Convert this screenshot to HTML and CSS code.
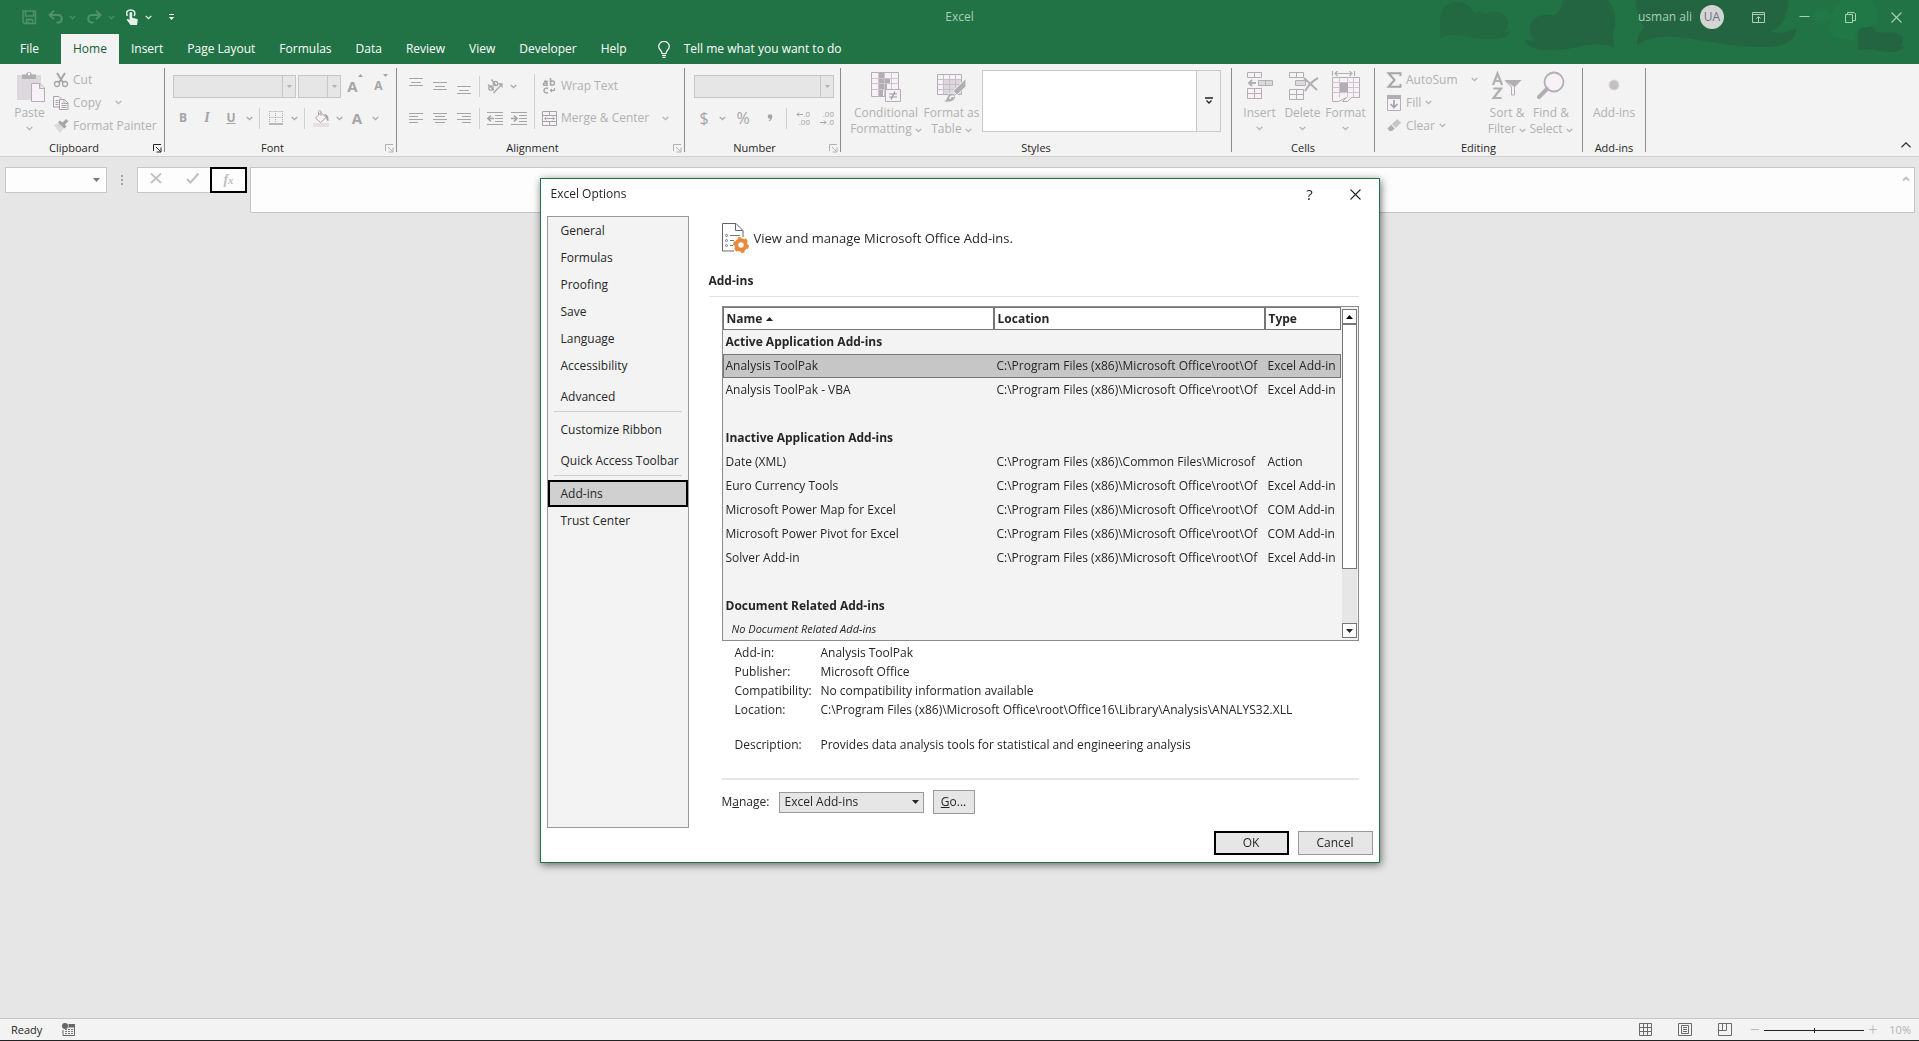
FILE: index.html
```
<!DOCTYPE html>
<html lang="en">

<head>
    <meta charset="utf-8" />
    <title>Excel</title>
    <meta name="viewport" content="width=device-width, initial-scale=1">
    <link rel="stylesheet" href="styles.css">
</head>

<body>
    <svg class="defs" aria-hidden="true">
        <symbol id="chev" viewBox="0 0 7 5"><path d="M.7.9l2.8 2.8L6.3.9" fill="none" stroke="currentColor" stroke-width="1.3" /></symbol>
        <symbol id="tri" viewBox="0 0 7 4"><path d="M0 0h7L3.500 4z" fill="currentColor" /></symbol>
        <symbol id="launch" viewBox="0 0 9 9"><path d="M.5 7V.5H8M3 3l4.500 4.500M8 3.500V8H3.500" fill="none" stroke="currentColor" /></symbol>
        <symbol id="close" viewBox="0 0 11 11"><path d="M.5.5l10 10M10.500.5l-10 10" fill="none" stroke="currentColor" stroke-width="1.100" /></symbol>
    </svg>

    <header class="top">
        <svg class="doodle" viewBox="0 0 519 64" aria-hidden="true">
            <g fill="#236541">
                <path opacity=".75" d="M40 39V20C40 8 48 2 57 2c9 0 15 5 17 12 4-3 9-2 11 0 10-5 23-2 23 9 0 4-1 7-3 9l6-1c-2 7-12 8-20 8-14 0-25-3-36-4-6 0-11 0-15 4z" />
                <path d="M130 28c0-11 10-14 24-13 5-3 9-8 8-15h46c8 9 9 22 5 34l1 14c-7-5-17-4-27-3-12 2-20 5-34 5-14 1-26-2-28-11 3 2 6 2 9 1-3-3-4-7-4-12z" />
                <path d="M236 0h152c0 16-6 27-18 32 10 2 20 0 26-4 2 13-12 19-34 19-30 0-50-5-76-9-18-3-36-2-49 7 0-9 3-13 8-18-8-8-9-18-9-27z" />
                <path d="M458 50V36c0-7 4-10 9-10 5 0 8 3 10 7 3-2 6-1 7 0 8-2 19 0 19 7 0 3-1 5-3 7l4-1c0 4-8 6-15 6-11 0-20-5-31-2z" />
            </g>
            <g fill="#217847">
                <path d="M432 14c2-6 5-11 9-14h28c8 6 10 16 8 26-5-1-9 0-11 2-8-3-12 3-11 12l-20-2c-7-6-7-17-3-24z" />
                <circle cx="422" cy="16" r="8" />
            </g>
        </svg>
        <div class="titlebar">
            <div class="quick">
                <button class="faded" aria-label="Save"><svg width="15" height="15" viewBox="0 0 15 15"><path d="M1 1h12.500v12.500H2.500L1 12zM3.500 1v5h8V1M4.500 13.500V9.500h6v4M6.500 11.500v2" fill="none" stroke="currentColor" stroke-width="1.500" /></svg></button>
                <button class="faded wide" aria-label="Undo"><svg width="15" height="14" viewBox="0 0 15 14"><path d="M6 .8L1.500 5 6 9.200M1.500 5H10c5 0 5 7.500 0 7.500H8.500" fill="none" stroke="currentColor" stroke-width="2" /></svg><svg class="chev"><use href="#chev" /></svg></button>
                <button class="faded wide" aria-label="Redo"><svg width="15" height="14" viewBox="0 0 15 14"><path d="M9 .8L13.500 5 9 9.200M13.500 5H5C0 5 0 12.500 5 12.500h1.500" fill="none" stroke="currentColor" stroke-width="2" /></svg><svg class="chev"><use href="#chev" /></svg></button>
                <button class="wide" aria-label="Touch/Mouse Mode"><svg width="13" height="17" viewBox="0 0 13 17"><path d="M1.500 7C-.5 3 1.500 1 4.700 1s5.200 2 3.500 6" fill="none" stroke="currentColor" stroke-width="1.500" /><path d="M3.500 4.500c0-2 2.700-2 2.700 0v4.200l4.300 1c1 .3 1.400.8 1.300 1.600L11 16H4.500L.5 10.500c.8-1 1.900-.7 3 .5z" fill="currentColor" /></svg><svg class="chev"><use href="#chev" /></svg></button>
                <button aria-label="Customize Quick Access Toolbar"><svg width="5" height="7" viewBox="0 0 5 7"><path d="M0 .5h5" stroke="#fff" /><path d="M0 3h5L2.500 6z" fill="#fff" /></svg></button>
            </div>
            <div class="app-name">Excel</div>
            <div class="account">
                <span>usman ali</span>
                <span class="avatar">UA</span>
                <div class="winbtns">
                    <button aria-label="Ribbon Display Options"><svg width="13" height="11" viewBox="0 0 13 11"><path d="M.5.5h12v10H.5zM.5 2.500h12M6.500 10V5M4.300 6.700l2.200-2.200 2.200 2.200" fill="none" stroke="currentColor" /></svg></button>
                    <button aria-label="Minimize"><svg width="11" height="11" viewBox="0 0 11 11"><path d="M.5 4.500h10" stroke="currentColor" /></svg></button>
                    <button aria-label="Restore"><svg width="11" height="11" viewBox="0 0 11 11"><path d="M.5 2.500h7v8h-7zM2.500 2V.5H9L10.500 2v6.500H8" fill="none" stroke="currentColor" /></svg></button>
                    <button aria-label="Close"><svg width="11" height="11"><use href="#close" /></svg></button>
                </div>
            </div>
        </div>
        <nav class="tabs">
            <a href="#" class="file">File</a>
            <a href="#" class="active">Home</a>
            <a href="#">Insert</a>
            <a href="#">Page Layout</a>
            <a href="#">Formulas</a>
            <a href="#">Data</a>
            <a href="#">Review</a>
            <a href="#">View</a>
            <a href="#">Developer</a>
            <a href="#">Help</a>
            <a href="#" class="tell"><svg width="12" height="17" viewBox="0 0 12 17"><path d="M4 12.500C4 9 .7 9 .7 5.500a5.200 5 0 0 1 10.600 0C11.300 9 8 9 8 12.500zM4 14.300h4M4.500 16.300h3" fill="none" stroke="currentColor" stroke-width="1.200" /></svg>Tell me what you want to do</a>
        </nav>
    </header>

    <section class="ribbon">
        <div class="group clipboard">
            <div class="tools">
                <button class="big" disabled>
                    <svg width="30" height="32" viewBox="0 0 30 32"><path d="M2 4h24v25H2z" fill="#ddd8dd" /><path d="M7 8V3.500h4C11.500 0 16.500 0 17 3.500h4V8z" fill="#b1afb1" /><circle cx="14" cy="3" r="1.200" fill="#fff" /><path d="M16.500 12.500H25l4.500 4.500v13.500h-13zM24.500 12.500V17.500h5" fill="#f8f2f8" stroke="#b1afb1" /></svg>
                    <span>Paste</span><svg class="chev"><use href="#chev" /></svg>
                </button>
                <div class="stack">
                    <button disabled><svg width="16" height="16" viewBox="0 0 16 16"><path d="M4 1l6 9.500M12 1L6 10.500" stroke="#a5a5a5" stroke-width="2" /><g fill="none" stroke="#a5a5a5" stroke-width="1.300"><circle cx="4" cy="12" r="2.500" /><circle cx="12" cy="12" r="2.500" /></g></svg>Cut</button>
                    <button class="spread" disabled><svg width="16" height="16" viewBox="0 0 16 16"><g fill="#f8f2f8" stroke="#a5a5a5"><path d="M.5 1.500H6L8.500 4v8h-8z" /><path d="M6.500 4.500h5L15 8v6.500H6.500zM11 4.500v4h4M8.500 8.500h2M8.500 10.500h5M8.500 12.500h5M2.500 5.500h3M2.500 7.500h3M2.500 9.500h3" /></g></svg><span>Copy</span><svg class="chev"><use href="#chev" /></svg></button>
                    <button disabled><svg width="16" height="16" viewBox="0 0 16 16"><path d="M1 7l5-2 5 5-4 5z" fill="#ddd8dd" /><path d="M5 4.500l2-2 2.500 2L13 1l2.500 2L12 6.500l1.500 2-2 2z" fill="#a5a5a5" /></svg>Format Painter</button>
                </div>
            </div>
            <div class="caption on">Clipboard<svg class="launch"><use href="#launch" /></svg></div>
        </div>

        <div class="group font">
            <div class="tools rows">
                <div class="row fields">
                    <div class="combo face"><select disabled aria-label="Font"></select><span><svg><use href="#tri" /></svg></span></div>
                    <div class="combo size"><select disabled aria-label="Font Size"></select><span><svg><use href="#tri" /></svg></span></div>
                    <button class="tool grow" disabled aria-label="Increase Font Size"><b>A</b><svg width="5" height="3" viewBox="0 0 5 3"><path d="M0 3h5L2.500 0z" fill="#a5a5a5" /></svg></button>
                    <button class="tool shrink" disabled aria-label="Decrease Font Size"><b>A</b><svg width="5" height="3" viewBox="0 0 5 3"><path d="M0 0h5L2.500 3z" fill="#a5a5a5" /></svg></button>
                </div>
                <div class="row">
                    <button class="tool" disabled><b>B</b></button>
                    <button class="tool" disabled><i>I</i></button>
                    <button class="tool" disabled><u>U</u></button>
                    <button class="drop" disabled aria-label="Underline style"><svg class="chev"><use href="#chev" /></svg></button>
                    <span class="sep"></span>
                    <button class="tool" disabled aria-label="Borders"><svg width="14" height="14" viewBox="0 0 14 14"><path d="M.5.500h13M.5 6.500h13M.5 0v12M6.500 0v12M13.500 0v12" stroke="#b3a7b3" stroke-dasharray="1 1" /><path d="M0 13h14" stroke="#a5a5a5" stroke-width="1.500" /></svg></button>
                    <button class="drop" disabled aria-label="Border menu"><svg class="chev"><use href="#chev" /></svg></button>
                    <span class="sep"></span>
                    <button class="tool" disabled aria-label="Fill Color"><svg width="16" height="17" viewBox="0 0 16 17"><path d="M0 13h16v4H0z" fill="#e6e0e6" /><path d="M2.500 8L8 2.500l5 5-5.500 5zM5.500 5V1.500C5.500.3 8 .3 8 1.500V6" fill="#f8f2f8" stroke="#a5a5a5" /><path d="M11 4c3 0 5 2 4.500 7-2 0-2-2-2.500-4z" fill="#a5a5a5" /></svg></button>
                    <button class="drop" disabled aria-label="Fill menu"><svg class="chev"><use href="#chev" /></svg></button>
                    <button class="tool letter" disabled><b>A</b></button>
                    <button class="drop" disabled aria-label="Font color menu"><svg class="chev"><use href="#chev" /></svg></button>
                </div>
            </div>
            <div class="caption">Font<svg class="launch"><use href="#launch" /></svg></div>
        </div>

        <div class="group align">
            <div class="tools">
                <div class="rows">
                    <div class="row">
                        <button class="tool" disabled aria-label="Top Align"><svg width="14" height="16" viewBox="0 0 14 16"><path d="M0 .5h14M2 4.500h10M0 7.500h14" stroke="#a5a5a5" /></svg></button>
                        <button class="tool" disabled aria-label="Middle Align"><svg width="14" height="16" viewBox="0 0 14 16"><path d="M0 4.500h14M2 8.500h10M0 11.500h14" stroke="#a5a5a5" /></svg></button>
                        <button class="tool" disabled aria-label="Bottom Align"><svg width="14" height="16" viewBox="0 0 14 16"><path d="M0 8.500h14M2 12.500h10M0 15.500h14" stroke="#a5a5a5" /></svg></button>
                        <span class="sep"></span>
                        <button class="tool" disabled aria-label="Orientation"><svg width="16" height="15" viewBox="0 0 16 15"><g fill="none" stroke="#a5a5a5" stroke-width="1.300"><circle cx="4" cy="9" r="2.200" /><path d="M1 5.500l6 5.500" /><circle cx="8.500" cy="4.500" r="2.200" /><path d="M4.500.5l4 5.500M6.500 14l8-8.500M11.500 5H15v3.500" /></g></svg></button>
                        <button class="drop" disabled aria-label="Orientation menu"><svg class="chev"><use href="#chev" /></svg></button>
                    </div>
                    <div class="row">
                        <button class="tool" disabled aria-label="Align Left"><svg width="14" height="11" viewBox="0 0 14 11"><path d="M0 .5h14M0 3.500h9M0 6.500h14M0 9.500h9" stroke="#a5a5a5" /></svg></button>
                        <button class="tool" disabled aria-label="Center"><svg width="14" height="11" viewBox="0 0 14 11"><path d="M0 .5h14M2 3.500h10M0 6.500h14M2 9.500h10" stroke="#a5a5a5" /></svg></button>
                        <button class="tool" disabled aria-label="Align Right"><svg width="14" height="11" viewBox="0 0 14 11"><path d="M0 .5h14M5 3.500h9M0 6.500h14M5 9.500h9" stroke="#a5a5a5" /></svg></button>
                        <span class="sep"></span>
                        <button class="tool" disabled aria-label="Decrease Indent"><svg width="16" height="13" viewBox="0 0 16 13"><path d="M0 .5h16M8 3.500h8M8 6.500h8M8 9.500h8M0 12.500h16" stroke="#a5a5a5" /><path d="M7 6.500H1.500M4 3.500l-3 3 3 3" fill="none" stroke="#a5a5a5" stroke-width="1.700" /></svg></button>
                        <button class="tool" disabled aria-label="Increase Indent"><svg width="16" height="13" viewBox="0 0 16 13"><path d="M0 .5h16M8 3.500h8M8 6.500h8M8 9.500h8M0 12.500h16" stroke="#a5a5a5" /><path d="M0 6.500h5.500M3 3.500l3 3-3 3" fill="none" stroke="#a5a5a5" stroke-width="1.700" /></svg></button>
                    </div>
                </div>
                <span class="sep tall"></span>
                <div class="rows wide">
                    <button class="row" disabled><svg width="15" height="16" viewBox="0 0 15 16"><g fill="none" stroke="#a5a5a5" stroke-width="1.500"><path d="M2 3.300h3v4H2.500c-1.500 0-1.500-2.300 0-2.300H5M8.500 0v7.500M8.500 4c1-1.500 4-1.500 4 1s-3 2.500-4 1.500M6 10.500c-2-1-4 0-4 2s2 3 4 2" /><path d="M12.500 10v2.500h-4M10 11l-1.500 1.500L10 14" stroke-width="1.200" /></g></svg>Wrap Text</button>
                    <button class="row spread" disabled><svg width="15" height="15" viewBox="0 0 15 15"><path d="M.5.500h14v14H.5zM.5 4.500h14M.5 10.500h14M7.500.5v4M7.500 10.500v4M2.500 7.500h10M4.500 5.800L2.700 7.500l1.800 1.700M10.500 5.800l1.800 1.700-1.800 1.700" fill="#f8f2f8" stroke="#a5a5a5" /></svg><span>Merge &amp; Center</span><svg class="chev"><use href="#chev" /></svg></button>
                </div>
            </div>
            <div class="caption">Alignment<svg class="launch"><use href="#launch" /></svg></div>
        </div>

        <div class="group number">
            <div class="tools rows">
                <div class="row fields">
                    <div class="combo format"><select disabled aria-label="Number Format"></select><span><svg><use href="#tri" /></svg></span></div>
                </div>
                <div class="row">
                    <button class="tool sign" disabled>$</button>
                    <button class="drop" disabled aria-label="Currency menu"><svg class="chev"><use href="#chev" /></svg></button>
                    <button class="tool sign pct" disabled>%</button>
                    <button class="tool sign" disabled aria-label="Comma Style"><svg width="6" height="8" viewBox="0 0 6 8"><circle cx="3" cy="2.500" r="2.300" fill="#a5a5a5" /><path d="M5.200 2.500C5.200 5 4 6.500 2 7.500L1.600 6.700C3 6 3.500 5 3.500 3z" fill="#a5a5a5" /></svg></button>
                    <span class="sep"></span>
                    <button class="tool dec" disabled><span><svg width="7" height="5" viewBox="0 0 7 5"><path d="M7 2.500H1M3 .5l-2 2 2 2" fill="none" stroke="currentColor" /></svg>.0</span><span>.00</span></button>
                    <button class="tool dec" disabled><span>.00</span><span><svg width="7" height="5" viewBox="0 0 7 5"><path d="M0 2.500h6M4 .5l2 2-2 2" fill="none" stroke="currentColor" /></svg>.0</span></button>
                </div>
            </div>
            <div class="caption">Number<svg class="launch"><use href="#launch" /></svg></div>
        </div>

        <div class="group styles">
            <div class="tools">
                <button class="big" disabled>
                    <svg width="32" height="32" viewBox="0 0 32 32"><path d="M1.500 1.500h27v24h-27z" fill="#f8f2f8" stroke="#b1afb1" /><path d="M8 2h7v5H8zM8 8h12v4H8zM8 13h9v5H8zM8 19h5v6H8z" fill="#b1afb1" /><path d="M1.500 7.500h27M1.500 12.500h27M1.500 18.500h27M8.500 1.500v24M14.500 1.500v24M21.500 1.500v24" stroke="#ccc6cc" fill="none" /><path d="M15.500 18.500h15v12h-15z" fill="#f8f2f8" stroke="#b1afb1" /><path d="M19 23h8M19 26h8M25 20.500l-4 8" stroke="#999" stroke-width="1.200" /></svg>
                    <span>Conditional</span><span>Formatting <svg class="chev"><use href="#chev" /></svg></span>
                </button>
                <button class="big" disabled>
                    <svg width="32" height="32" viewBox="0 0 32 32"><path d="M1.500 3.500h24v20h-24z" fill="#f8f2f8" stroke="#b1afb1" /><path d="M8 9h17v14H8z" fill="#ddd8dd" /><path d="M1.500 8.500h24M1.500 13.500h24M1.500 18.500h24M7.500 3.500v20M13.500 3.500v20M19.500 3.500v20" stroke="#c6c0c6" /><path d="M30 7.500v8L21 24l-4-4zM7 31c5-2 3-8 8-9 4 0 6 4 3 7-3 3-7 2-11 2z" fill="#b1afb1" stroke="#f3f3f3" /><path d="M14 28c0-3 3-4 4-2" fill="none" stroke="#fff" stroke-width="1.500" /></svg>
                    <span>Format as</span><span>Table <svg class="chev"><use href="#chev" /></svg></span>
                </button>
                <div class="gallery"><div></div><button aria-label="More styles"><svg width="8" height="8" viewBox="0 0 8 8"><path d="M0 1h8M1.500 3.500L4 6l2.500-2.500" fill="none" stroke="#222" stroke-width="1.300" /></svg></button></div>
            </div>
            <div class="caption">Styles</div>
        </div>

        <div class="group cells">
            <div class="tools">
                <button class="big" disabled>
                    <svg width="32" height="32" viewBox="0 0 32 32"><g fill="#f8f2f8" stroke="#b1afb1"><path d="M3.500 1.500h14v5h-14zM10.500 1.500v5M3.500 17.500h14v10h-14zM10.500 17.500v10M3.500 22.500h14" /><path d="M14.500 9.500h14v5h-14zM21.500 9.500v5" fill="#ddd8dd" /></g><path d="M12 12H5M8 9l-3 3 3 3" fill="none" stroke="#b1afb1" stroke-width="2" /></svg>
                    <span>Insert</span><svg class="chev"><use href="#chev" /></svg>
                </button>
                <button class="big" disabled>
                    <svg width="32" height="32" viewBox="0 0 32 32"><g fill="#f8f2f8" stroke="#b1afb1"><path d="M2.500 1.500h14v5h-14zM9.500 1.500v5M2.500 18.500h14v10h-14zM9.500 18.500v10M2.500 23.500h14" /><path d="M8.500 9.500h10v5h-10z" fill="#ddd8dd" /></g><path d="M17 7l13 12M31 7c-6 3-10 8-13 13" fill="none" stroke="#b1afb1" stroke-width="2" /></svg>
                    <span>Delete</span><svg class="chev"><use href="#chev" /></svg>
                </button>
                <button class="big" disabled>
                    <svg width="32" height="32" viewBox="0 0 32 32"><path d="M2.500 6.500h27v20h-8l-4 4h-5l4-4-8 4h-6z" fill="#f8f2f8" stroke="#b1afb1" /><path d="M2.500 11.500h27M2.500 16.500h27M2.500 21.500h27M9.500 6.500v20M17.500 6.500v20M23.500 6.500v20" stroke="#ccc6cc" /><path d="M10 12h8v9h-8z" fill="#b1afb1" /><path d="M2.500 0v5M24.500 0v5M5 2.500h17M7.500 0L5 2.500 7.500 5M19.500 0L22 2.500 19.500 5" fill="none" stroke="#b1afb1" stroke-width="1.200" /></svg>
                    <span>Format</span><svg class="chev"><use href="#chev" /></svg>
                </button>
            </div>
            <div class="caption">Cells</div>
        </div>

        <div class="group editing">
            <div class="tools">
                <div class="stack">
                    <button class="spread" disabled><svg width="16" height="16" viewBox="0 0 16 16"><path d="M14.500 4V1.200H2.500L8.500 8l-6 6.800h12V12" fill="none" stroke="#a5a5a5" stroke-width="2" /></svg><span>AutoSum</span><svg class="chev"><use href="#chev" /></svg></button>
                    <button disabled><svg width="16" height="16" viewBox="0 0 16 16"><path d="M1.500.5h13v15h-13z" fill="#f8f2f8" stroke="#b1afb1" /><path d="M1 0h14v4H1z" fill="#b1afb1" /><path d="M8 5v7.500M4.500 9L8 12.500 11.500 9" fill="none" stroke="#a5a5a5" stroke-width="1.700" /></svg>Fill <svg class="chev"><use href="#chev" /></svg></button>
                    <button disabled><svg width="16" height="16" viewBox="0 0 16 16"><path d="M6 6l5.500-5 3.500 4-5.500 5z" fill="#c9c4c9" /><path d="M5.200 6.700L8.700 10.700 6 13H3.500L1.500 10.500z" fill="#b1afb1" /></svg>Clear <svg class="chev"><use href="#chev" /></svg></button>
                </div>
                <button class="big" disabled>
                    <svg width="32" height="32" viewBox="0 0 32 32"><path d="M2 14L6.500 2.500 11 14M3.500 10h6M2.500 17.500h7.500L2.500 27h8" fill="none" stroke="#b1afb1" stroke-width="2.200" /><path d="M13.500 9h17l-6.500 7h-4z" fill="#b1afb1" /><path d="M15 10.500l5.500 5.500v8h3v-8" fill="#f8f2f8" stroke="#b1afb1" /></svg>
                    <span>Sort &amp;</span><span>Filter <svg class="chev"><use href="#chev" /></svg></span>
                </button>
                <button class="big" disabled>
                    <svg width="32" height="32" viewBox="0 0 32 32"><circle cx="19" cy="11" r="9.500" fill="#f8f2f8" stroke="#b1afb1" stroke-width="1.800" /><path d="M12 18l-8 8" stroke="#b1afb1" stroke-width="4" stroke-linecap="round" /></svg>
                    <span>Find &amp;</span><span>Select <svg class="chev"><use href="#chev" /></svg></span>
                </button>
            </div>
            <div class="caption">Editing</div>
        </div>

        <div class="group addins">
            <div class="tools">
                <button class="big" disabled>
                    <svg width="32" height="32" viewBox="0 0 32 32"><circle cx="16" cy="14" r="5.500" fill="#dedbde" /><circle cx="16" cy="14" r="4.500" fill="#c3bfc3" /></svg>
                    <span>Add-ins</span>
                </button>
            </div>
            <div class="caption">Add-ins</div>
        </div>
        <button class="collapse" aria-label="Collapse the Ribbon"><svg width="10" height="6" viewBox="0 0 10 6"><path d="M.5 5.300L5 .8l4.500 4.500" fill="none" stroke="#333" stroke-width="1.300" /></svg></button>
    </section>

    <section class="formula">
        <div class="namebox"><input type="text" aria-label="Name Box"><svg><use href="#tri" /></svg></div>
        <svg class="dots" width="2" height="10" viewBox="0 0 2 10"><path d="M0 0h2v2H0zM0 4h2v2H0zM0 8h2v2H0z" fill="#a5a5a5" /></svg>
        <div class="fbtns">
            <button disabled aria-label="Cancel entry"><svg width="12" height="11" viewBox="0 0 12 11"><path d="M1 .5l10 9.500M11 .5L1 10" stroke="#bfbfbf" stroke-width="1.800" /></svg></button>
            <button disabled aria-label="Enter"><svg width="13" height="11" viewBox="0 0 13 11"><path d="M1 6l3.500 3.500L12.500.5" fill="none" stroke="#bfbfbf" stroke-width="2" /></svg></button>
            <button class="fx" aria-label="Insert Function"><i>f</i><i class="sub">x</i></button>
        </div>
        <div class="fbar"><textarea aria-label="Formula Bar"></textarea><svg width="8" height="5" viewBox="0 0 8 5"><path d="M1 4.500l3-3 3 3" fill="none" stroke="#bfbfbf" stroke-width="1.800" /></svg></div>
    </section>

    <main class="workspace"></main>

    <footer class="status">
        <span>Ready</span>
        <svg width="13" height="13" viewBox="0 0 13 13"><path d="M1 7v5.500h11.500V4H6M6 2h6.500" fill="none" stroke="#666" /><path d="M7 1h6v3H7z" fill="#666" /><circle cx="3" cy="3" r="3" fill="#666" /><path d="M3 6.500h8M3 8.500h8M3 10.500h8" stroke="#777" stroke-dasharray="2 1" /></svg>
        <div class="views">
            <button aria-label="Normal"><svg width="13" height="13" viewBox="0 0 13 13"><path d="M.5.500h12v12H.5zM4.500.5v12M8.500.5v12M.5 4.500h12M.5 8.500h12" fill="none" stroke="currentColor" /></svg></button>
            <button aria-label="Page Layout"><svg width="14" height="13" viewBox="0 0 14 13"><path d="M.5.500h13v12H.5zM3.500 2.500h7v8h-7zM5 4.500h4M5 6.500h4M5 8.500h4" fill="none" stroke="currentColor" /></svg></button>
            <button aria-label="Page Break Preview"><svg width="14" height="13" viewBox="0 0 14 13"><path d="M.5.500h13v12H.5zM.5 7.500h8V.5M4.500.5v7" fill="none" stroke="currentColor" /></svg></button>
        </div>
        <div class="zoom">
            <svg width="8" height="9" viewBox="0 0 8 9"><path d="M0 4.500h8" stroke="#bbb" /></svg>
            <svg width="100" height="9" viewBox="0 0 100 9"><path d="M0 5.500h100M50.500 3v5" stroke="#222" /></svg>
            <svg width="8" height="9" viewBox="0 0 8 9"><path d="M0 4.500h8M4 .5v8" stroke="#bbb" /></svg>
        </div>
        <span class="percent">10%</span>
    </footer>

    <div class="overlay">
        <div class="dialog" role="dialog" aria-labelledby="dlgTitle">
            <div class="dlg-head">
                <span id="dlgTitle">Excel Options</span>
                <button class="help" aria-label="Help">?</button>
                <button aria-label="Close"><svg width="11" height="11"><use href="#close" /></svg></button>
            </div>
            <div class="dlg-main">
                <nav class="side">
                    <a href="#">General</a>
                    <a href="#">Formulas</a>
                    <a href="#">Proofing</a>
                    <a href="#">Save</a>
                    <a href="#">Language</a>
                    <a href="#">Accessibility</a>
                    <a href="#" class="last">Advanced</a>
                    <hr>
                    <a href="#">Customize Ribbon</a>
                    <a href="#" class="last">Quick Access Toolbar</a>
                    <hr>
                    <a href="#" class="current">Add-ins</a>
                    <a href="#">Trust Center</a>
                </nav>
                <div class="pane">
                    <div class="intro">
                        <svg width="28" height="30" viewBox="0 0 28 30"><path d="M12 28H.5V.5H14L21 7.500v6.500M13.500.5V7.500h7" fill="none" stroke="#666" /><g fill="none" stroke="#777"><path d="M8 12.500h10M8 17.500h4M8 22.500h3" /><circle cx="4.500" cy="12.500" r="1" /><circle cx="4.500" cy="17.500" r="1" /><circle cx="4.500" cy="22.500" r="1" /></g><circle cx="19" cy="22" r="4.700" fill="none" stroke="#e8893c" stroke-width="4" /><circle cx="19" cy="22" r="6.700" fill="none" stroke="#e8893c" stroke-width="2.500" stroke-dasharray="3.500 3.516" /></svg>
                        <span>View and manage Microsoft Office Add-ins.</span>
                    </div>
                    <h2>Add-ins</h2>
                    <div class="body">
                        <div class="list">
                            <table>
                                <thead>
                                    <tr>
                                        <th>Name <svg width="7" height="4" viewBox="0 0 7 4"><path d="M0 4h7L3.500 0z" fill="#222" /></svg></th>
                                        <th>Location</th>
                                        <th>Type</th>
                                    </tr>
                                </thead>
                                <tbody>
                                    <tr><th colspan="3">Active Application Add-ins</th></tr>
                                    <tr class="selected"><td>Analysis ToolPak</td><td>C:\Program Files (x86)\Microsoft Office\root\Of</td><td>Excel Add-in</td></tr>
                                    <tr><td>Analysis ToolPak - VBA</td><td>C:\Program Files (x86)\Microsoft Office\root\Of</td><td>Excel Add-in</td></tr>
                                    <tr><td colspan="3"></td></tr>
                                    <tr><th colspan="3">Inactive Application Add-ins</th></tr>
                                    <tr><td>Date (XML)</td><td>C:\Program Files (x86)\Common Files\Microsof</td><td>Action</td></tr>
                                    <tr><td>Euro Currency Tools</td><td>C:\Program Files (x86)\Microsoft Office\root\Of</td><td>Excel Add-in</td></tr>
                                    <tr><td>Microsoft Power Map for Excel</td><td>C:\Program Files (x86)\Microsoft Office\root\Of</td><td>COM Add-in</td></tr>
                                    <tr><td>Microsoft Power Pivot for Excel</td><td>C:\Program Files (x86)\Microsoft Office\root\Of</td><td>COM Add-in</td></tr>
                                    <tr><td>Solver Add-in</td><td>C:\Program Files (x86)\Microsoft Office\root\Of</td><td>Excel Add-in</td></tr>
                                    <tr><td colspan="3"></td></tr>
                                    <tr><th colspan="3">Document Related Add-ins</th></tr>
                                    <tr class="none"><td colspan="3">No Document Related Add-ins</td></tr>
                                </tbody>
                            </table>
                            <div class="scroll">
                                <button aria-label="Scroll up"><svg width="7" height="4" viewBox="0 0 7 4"><path d="M0 4h7L3.500 0z" fill="#000" /></svg></button>
                                <div class="track"><div class="thumb"></div></div>
                                <button aria-label="Scroll down"><svg width="7" height="4"><use href="#tri" /></svg></button>
                            </div>
                        </div>
                        <dl>
                            <dt>Add-in:</dt><dd>Analysis ToolPak</dd>
                            <dt>Publisher:</dt><dd>Microsoft Office</dd>
                            <dt>Compatibility:</dt><dd>No compatibility information available</dd>
                            <dt>Location:</dt><dd>C:\Program Files (x86)\Microsoft Office\root\Office16\Library\Analysis\ANALYS32.XLL</dd>
                            <dt class="desc">Description:</dt><dd class="desc">Provides data analysis tools for statistical and engineering analysis</dd>
                        </dl>
                        <div class="manage">
                            <label for="manage">M<u>a</u>nage:</label>
                            <div class="pick"><select id="manage"><option>Excel Add-ins</option></select><svg width="7" height="4"><use href="#tri" /></svg></div>
                            <button class="btn go"><u>G</u>o...</button>
                        </div>
                    </div>
                </div>
            </div>
            <div class="dlg-foot">
                <button class="btn default">OK</button>
                <button class="btn">Cancel</button>
            </div>
        </div>
    </div>
</body>

</html>
```
FILE: styles.css
```
* {
    box-sizing: border-box;
}

html,
body {
    height: 100%;
    margin: 0;
}

body {
    display: flex;
    flex-direction: column;
    background: #e6e6e6;
    color: #262626;
    font: 12px/16px "Open Sans", "Noto Sans", sans-serif;
    overflow: hidden;
}

button,
select,
input,
textarea {
    font: inherit;
    color: inherit;
    background: none;
    border: 0;
    border-radius: 0;
    padding: 0;
    margin: 0;
    outline: none;
}

a {
    color: inherit;
    text-decoration: none;
}

svg {
    flex: none;
}

.defs {
    display: none;
}

.chev {
    width: 7px;
    height: 5px;
}

/* title bar and tabs */
.top {
    position: relative;
    background: #217346;
    color: #fff;
}

.doodle {
    position: absolute;
    right: 0;
    top: 0;
    width: 519px;
    height: 64px;
}

.titlebar {
    position: relative;
    display: grid;
    grid-template-columns: 1fr auto 1fr;
    align-items: center;
    height: 34px;
}

.quick {
    display: flex;
    align-items: center;
    gap: 11px;
    padding-left: 22px;
}

.quick button {
    display: flex;
    align-items: center;
    color: #e6efe9;
}

.quick .wide {
    gap: 6px;
}

.quick .faded {
    color: #4f916a;
}

.quick button:last-child {
    padding-left: 6px;
}

.app-name,
.account {
    color: #a9d0b8;
}

.account {
    display: flex;
    justify-content: flex-end;
    align-items: center;
}

.avatar {
    width: 24px;
    margin: 0 11px 0 8px;
    border-radius: 50%;
    background: #d4d4d4;
    color: #6a7480;
    line-height: 24px;
    text-align: center;
}

.winbtns {
    display: flex;
}

.winbtns button {
    display: flex;
    align-items: center;
    justify-content: center;
    width: 46px;
    height: 30px;
}

.tabs {
    position: relative;
    display: flex;
    height: 30px;
    line-height: 30px;
}

.tabs a {
    padding: 0 12px;
}

.tabs .file {
    padding: 0 22px 0 20px;
}

.tabs .active {
    background: #f3f3f3;
    color: #185c37;
}

.tabs .tell {
    display: flex;
    align-items: center;
    gap: 14px;
    padding-left: 19px;
}

/* ribbon */
.ribbon {
    display: flex;
    flex: none;
    padding: 4px 0;
    background: #f3f3f3;
    border-bottom: 1px solid #cfcfcf;
    color: #b1b1b1;
}

.group {
    display: flex;
    flex-direction: column;
    flex: none;
    height: 84px;
    border-right: 1px solid #8c8c8c;
}

.group button {
    white-space: nowrap;
}

.tools {
    display: flex;
    flex: 1;
}

.caption {
    position: relative;
    height: 15px;
    padding-right: 16px;
    color: #262626;
    font-size: 11px;
    line-height: 22px;
    text-align: center;
}

.launch {
    position: absolute;
    right: 2px;
    top: 7px;
    width: 9px;
    height: 9px;
    color: #b1b1b1;
}

.on .launch {
    color: #262626;
}

.clipboard { width: 165px; }
.font { width: 232px; }
.align { width: 288px; }
.number { width: 156px; }
.styles { width: 391px; }
.cells { width: 143px; }
.editing { width: 208px; }
.addins { width: 63px; }

.styles .caption,
.cells .caption,
.editing .caption,
.addins .caption {
    padding: 0;
}

.big {
    display: flex;
    flex-direction: column;
    align-items: center;
    padding-top: 3px;
}

.big > svg:first-child {
    margin-bottom: 2px;
}

.big > .chev {
    margin-top: 5px;
}

.stack {
    display: flex;
    flex-direction: column;
}

.stack button {
    display: flex;
    align-items: center;
    gap: 4px;
    height: 23px;
}

.spread span {
    margin-right: auto;
}

.clipboard .big {
    width: 53px;
    padding-left: 6px;
}

.clipboard .spread {
    width: 69px;
}

.rows {
    flex-direction: column;
    gap: 2px;
}

div.rows {
    display: flex;
}

.row {
    display: flex;
    align-items: center;
    height: 30px;
}

.tools.rows,
.align .rows {
    padding-top: 3px;
}

.tool,
.drop {
    display: flex;
    align-items: center;
    justify-content: center;
    width: 24px;
    height: 24px;
    color: #a5a5a5;
}

.drop {
    width: 12px;
}

.tool u {
    font-weight: bold;
}

.tool i {
    font: italic bold 14px/16px "Liberation Serif", serif;
}

.letter b,
.grow b {
    font-size: 15px;
}

.grow,
.shrink {
    align-items: flex-start;
}

.grow b,
.shrink b {
    line-height: 24px;
}

.sep {
    width: 1px;
    height: 21px;
    margin: 0 4px;
    background: #d0d0d0;
}

.align .sep {
    margin: 0 3px;
}

.align .tall {
    height: 55px;
    margin: 6px 7px 0 3px;
}

.font .tools {
    padding-left: 6px;
}

.align .tools,
.number .tools {
    padding-left: 7px;
}

.fields {
    gap: 2px;
    padding-left: 2px;
}

.combo,
.pick,
.namebox,
.fbar {
    display: grid;
}

.combo > *,
.pick > *,
.namebox > *,
.fbar > * {
    grid-area: 1 / 1;
}

.combo select {
    appearance: none;
    height: 23px;
    background: #e6e6e6;
    border: 1px solid #c6c6c6;
    opacity: 1;
}

.combo span {
    display: flex;
    align-items: center;
    justify-content: center;
    justify-self: end;
    width: 14px;
    border-left: 1px solid #c6c6c6;
}

.combo span svg {
    width: 5px;
    height: 3px;
}

.face { width: 123px; }
.size { width: 43px; }
.format { width: 140px; }

.align .wide {
    width: 127px;
}

.wide .row {
    gap: 4px;
}

.sign {
    font-size: 16px;
}

.sign.pct {
    width: 30px;
}

.dec {
    flex-direction: column;
    align-items: flex-end;
    padding-right: 5px;
    font-size: 8px;
    line-height: 8px;
}

.dec span {
    display: flex;
    align-items: center;
}

.styles .tools {
    padding-left: 10px;
}

.styles .big:first-child {
    width: 70px;
}

.styles .big {
    width: 61px;
}

.gallery {
    display: flex;
    width: 239px;
    height: 62px;
    margin-top: 2px;
    background: #fff;
    border: 1px solid #c9c9c9;
}

.gallery div {
    flex: 1;
}

.gallery button {
    width: 24px;
    background: #f3f3f3;
    border-left: 1px solid #c9c9c9;
}

.cells .tools {
    padding-left: 6px;
}

.cells .big {
    width: 43px;
}

.editing .tools {
    padding-left: 11px;
}

.editing .stack {
    width: 99px;
}

.editing .spread {
    width: 92px;
}

.editing .big {
    width: 44px;
}

.addins .big {
    width: 62px;
}

.collapse {
    align-self: flex-end;
    margin-left: auto;
    padding-right: 8px;
}

/* formula bar */
.formula {
    display: flex;
    align-items: flex-start;
    padding: 10px 4px 0 5px;
}

.namebox {
    width: 102px;
    height: 26px;
    background: #fdfdfd;
    border: 1px solid #c6c6c6;
}

.namebox input {
    width: 100%;
    min-width: 0;
}

.namebox svg {
    width: 7px;
    height: 4px;
    place-self: center end;
    margin-right: 6px;
    color: #777;
}

.dots {
    margin: 8px 14px;
}

.fbtns {
    display: flex;
    height: 26px;
    background: #fdfdfd;
    border: 1px solid #c6c6c6;
    border-right: 0;
}

.fbtns button {
    width: 36px;
}

.fbtns .fx {
    width: 37px;
    margin: -1px 0;
    border: 2px solid #000;
    color: #bfbfbf;
    font: bold 14px/16px "Liberation Serif", serif;
}

.fx .sub {
    font-size: 11px;
}

.fbar {
    flex: 1;
    height: 46px;
    margin-left: 3px;
    background: #fdfdfd;
    border: 1px solid #c6c6c6;
}

.fbar textarea {
    resize: none;
}

.fbar svg {
    justify-self: end;
    margin: 8px 4px;
}

.workspace {
    flex: 1;
}

/* status bar */
.status {
    display: flex;
    align-items: center;
    height: 23px;
    padding: 0 8px 0 11px;
    background: #f3f3f3;
    border-top: 1px solid #c6c6c6;
    border-bottom: 1px solid #222;
    font-size: 11px;
}

.status > svg {
    margin-left: 20px;
}

.views {
    display: flex;
    gap: 26px;
    margin-left: auto;
    color: #6a6a6a;
}

.views button,
.zoom {
    display: flex;
    align-items: center;
}

.zoom {
    gap: 5px;
    margin: 0 12px 0 19px;
}

.percent {
    color: #b1b1b1;
}

/* options dialog */
.overlay {
    position: fixed;
    inset: 0;
    display: flex;
    align-items: center;
    justify-content: center;
}

.dialog {
    display: flex;
    flex-direction: column;
    width: 840px;
    max-width: 100%;
    background: #fff;
    border: 1px solid #217346;
    box-shadow: 1px 2px 8px rgba(0, 0, 0, .55);
}

.dlg-head {
    display: flex;
    align-items: center;
    height: 30px;
    padding-left: 10px;
}

.dlg-head span {
    flex: 1;
}

.dlg-head button {
    display: flex;
    align-items: center;
    justify-content: center;
    width: 46px;
    height: 30px;
}

.dlg-head .help {
    font-size: 15px;
}

.dlg-main {
    display: flex;
    padding: 7px 20px 0 6px;
}

.side {
    flex: none;
    width: 142px;
    height: 612px;
    border: 1px solid #999;
    background: #f3f3f3;
}

.side a {
    display: block;
    height: 27px;
    padding-left: 13px;
    line-height: 27px;
}

.side .last {
    margin-top: 4px;
}

.side hr {
    height: 1px;
    margin: 1px 6px 4px;
    border: 0;
    background: #d0d0d0;
}

.side .current {
    padding-left: 11px;
    border: 2px solid #000;
    background: #d0d0d0;
    line-height: 23px;
}

.pane {
    flex: 1;
    min-width: 0;
    padding: 7px 0 0 20px;
}

.intro {
    display: flex;
    align-items: center;
    gap: 4px;
    padding-left: 13px;
    font-size: 13px;
}

h2 {
    margin: 20px 0 9px;
    padding-bottom: 7px;
    border-bottom: 1px solid #e1e1e1;
    font-size: 12px;
    line-height: 16px;
}

.body {
    padding-left: 13px;
}

.list {
    display: flex;
    height: 335px;
    border: 1px solid #8c8c8c;
    background: #f3f3f3;
}

table {
    flex: 1;
    align-self: flex-start;
    table-layout: fixed;
    border-collapse: separate;
    border-spacing: 0;
}

th,
td {
    height: 24px;
    padding: 0 3px;
    overflow: hidden;
    text-align: left;
    white-space: nowrap;
}

thead th {
    height: 23px;
    background: #fff;
    border: 1px solid #767676;
}

thead th:nth-child(-n+2) {
    width: 271px;
}

thead svg {
    vertical-align: 2px;
}

.selected {
    background: #c6c6c6;
    outline: 1px solid #767676;
    outline-offset: -1px;
}

.none td {
    height: 22px;
    padding-left: 9px;
    font-size: 11px;
    font-style: italic;
}

.scroll {
    display: flex;
    flex-direction: column;
    width: 17px;
    padding: 2px 1px 2px 1px;
}

.scroll button {
    display: flex;
    align-items: center;
    justify-content: center;
    height: 15px;
    background: #fff;
    border: 1px solid #767676;
}

.track {
    flex: 1;
    background: #e6e6e6;
}

.thumb {
    height: 82%;
    background: #fff;
    border: 1px solid #767676;
}

dl {
    display: grid;
    grid-template-columns: 86px 1fr;
    margin: 0;
    padding: 2px 0 24px 13px;
    line-height: 19px;
    white-space: nowrap;
}

dd {
    margin: 0;
}

.desc {
    margin-top: 16px;
}

.manage {
    display: flex;
    align-items: center;
    padding-top: 10px;
    border-top: 2px solid #e6e6e6;
}

.manage label {
    width: 57px;
}

.pick {
    width: 145px;
    margin-right: 9px;
}

.pick select {
    appearance: none;
    height: 21px;
    padding-left: 5px;
    border: 1px solid #999;
    background: #e6e6e6;
}

.pick svg {
    place-self: center end;
    margin-right: 5px;
}

.btn {
    width: 75px;
    height: 24px;
    border: 1px solid #999;
    background: #e6e6e6;
}

.go {
    width: 42px;
}

.default {
    border: 2px solid #000;
}

.dlg-foot {
    display: flex;
    justify-content: flex-end;
    gap: 9px;
    padding: 3px 6px 7px;
}
```
